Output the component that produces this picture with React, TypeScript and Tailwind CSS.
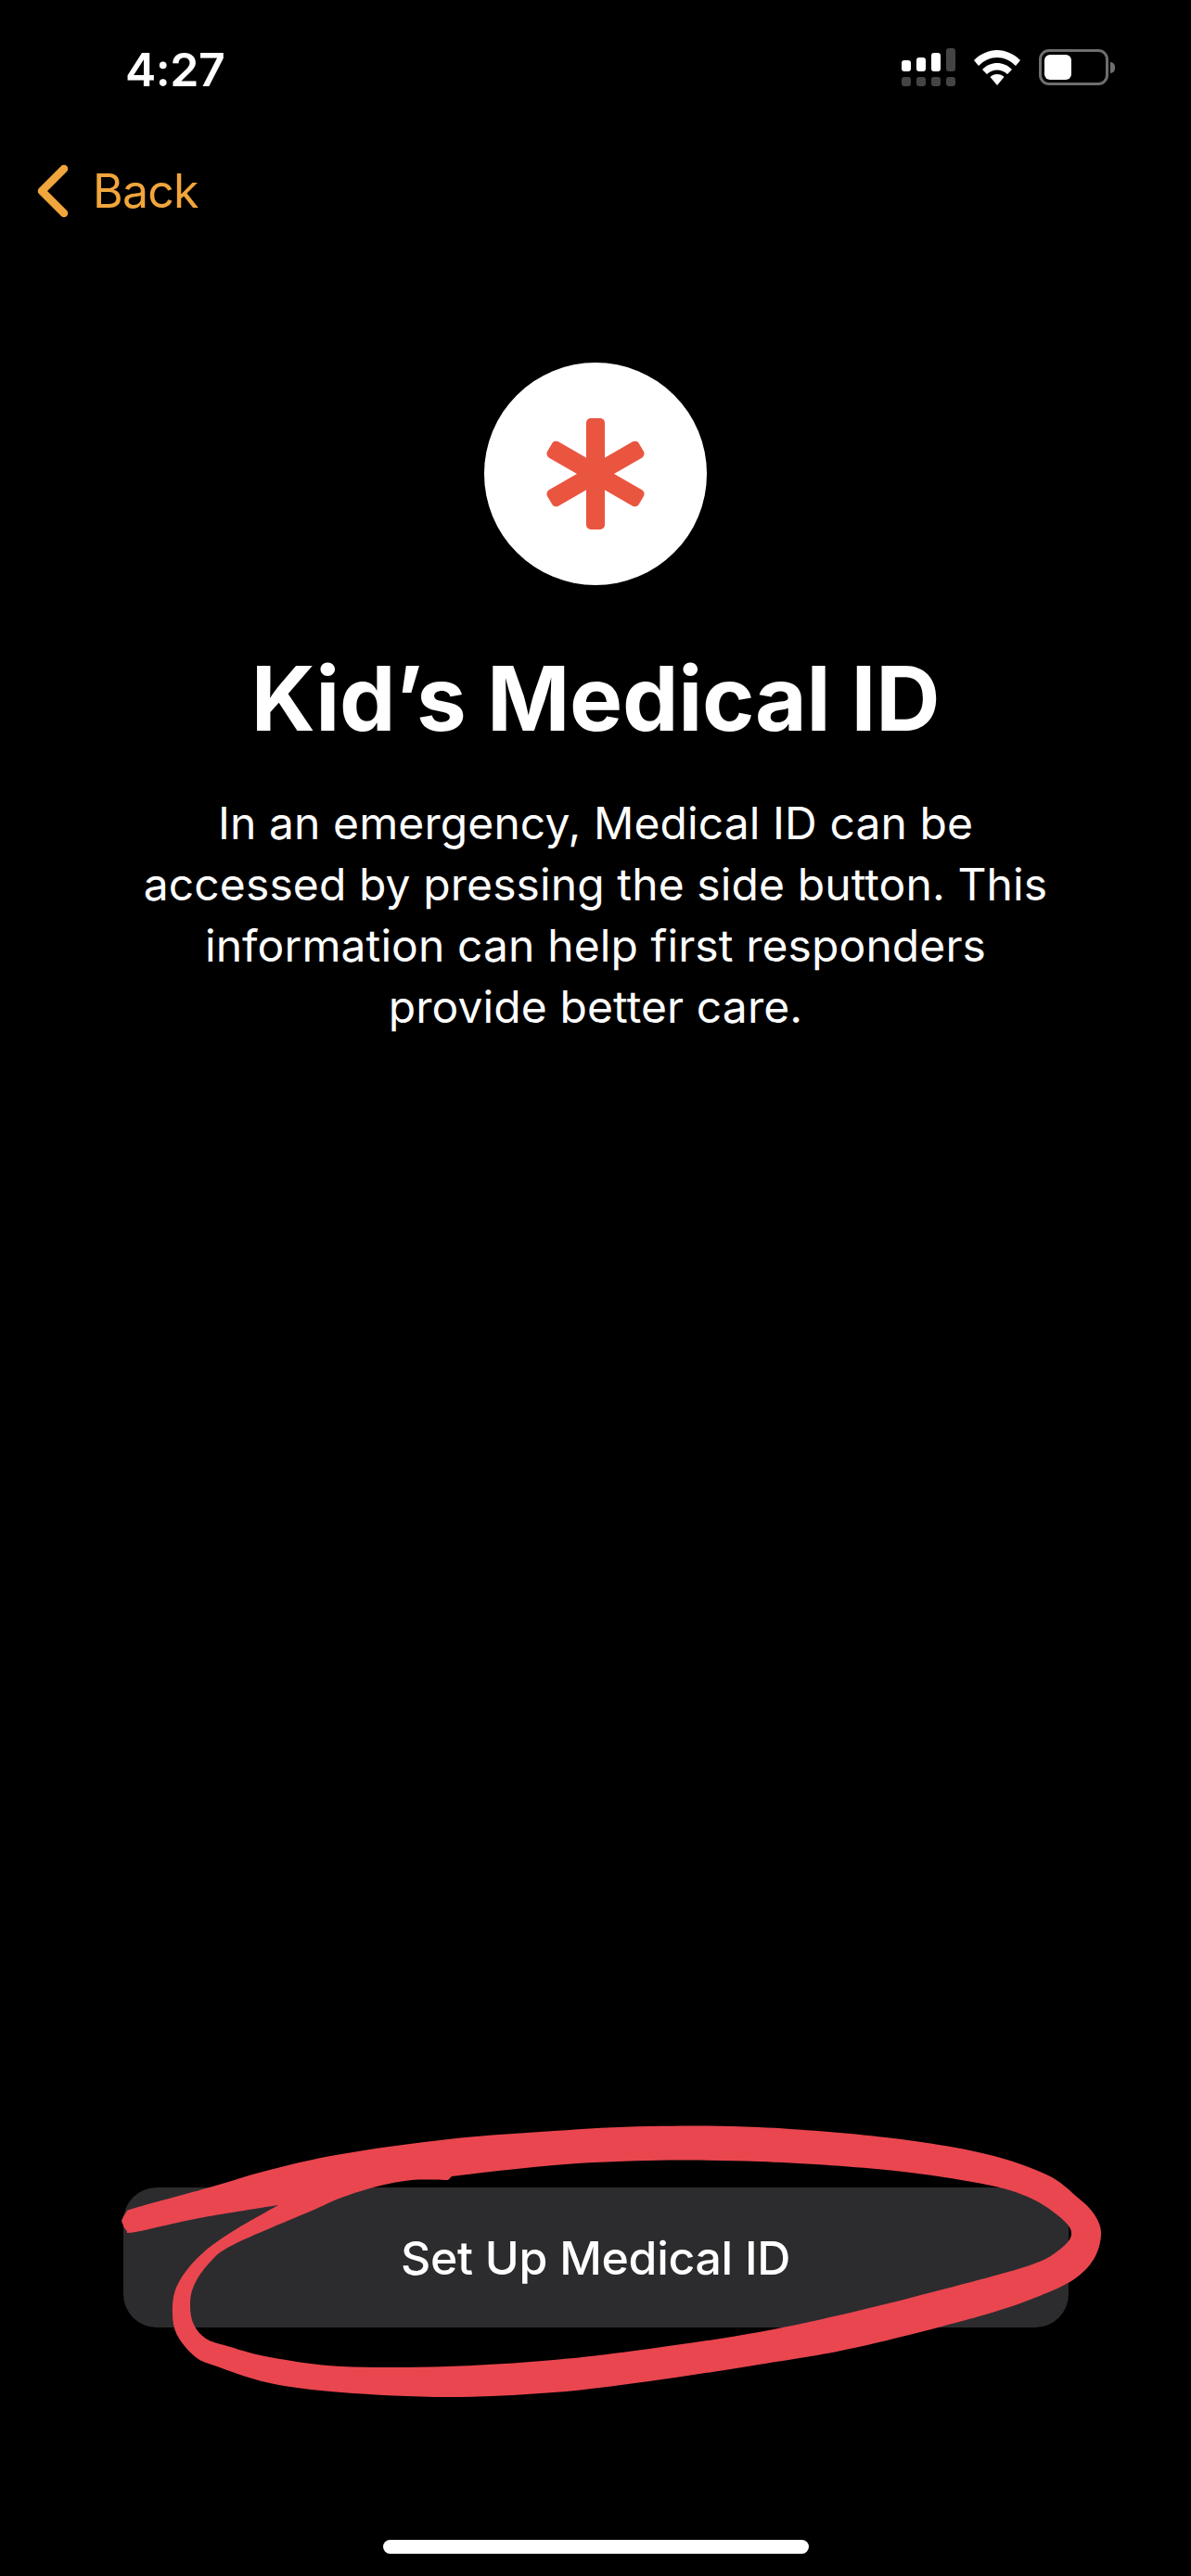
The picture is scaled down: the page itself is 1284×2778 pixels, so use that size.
import React from 'react';

type Pt = [number, number];

// turns a list of points into a smooth curve (catmull-rom), keeps the hand drawn look
const smooth = (pts: Pt[]) => {
  let d = '';
  for (let i = 0; i < pts.length - 1; i++) {
    const p0 = pts[i - 1] || pts[i];
    const p1 = pts[i];
    const p2 = pts[i + 1];
    const p3 = pts[i + 2] || p2;
    const c1x = p1[0] + (p2[0] - p0[0]) / 6;
    const c1y = p1[1] + (p2[1] - p0[1]) / 6;
    const c2x = p2[0] - (p3[0] - p1[0]) / 6;
    const c2y = p2[1] - (p3[1] - p1[1]) / 6;
    d += ` C${c1x} ${c1y} ${c2x} ${c2y} ${p2[0]} ${p2[1]}`;
  }
  return d;
};

const outer: Pt[] = [
  [131, 2395], [136, 2386], [146, 2381], [222, 2360], [291, 2340], [368, 2323], [483, 2307], [597, 2298], [700, 2293],
  [818, 2294], [955, 2305], [1059, 2322], [1128, 2345], [1162, 2370], [1179, 2387], [1187, 2407], [1181, 2433], [1162, 2455],
  [1128, 2473], [1059, 2497], [921, 2532], [818, 2550], [700, 2568], [597, 2580], [483, 2585], [368, 2580],
  [291, 2570], [234, 2552], [211, 2542], [192, 2520], [186, 2497], [190, 2467], [211, 2437], [245, 2410], [300, 2378],
];
const tail: Pt[] = [[300, 2378], [215, 2392], [146, 2407], [136, 2405], [131, 2395]];
const hole: Pt[] = [
  [341, 2382], [253, 2420], [226, 2440], [209, 2465], [205, 2487], [209, 2507], [222, 2522], [245, 2530], [291, 2542],
  [368, 2552], [483, 2552], [597, 2545], [700, 2533], [818, 2515], [921, 2493], [1024, 2467], [1110, 2443],
  [1141, 2427], [1155, 2410], [1145, 2393], [1110, 2370], [1059, 2355], [955, 2340], [818, 2331], [700, 2330],
  [597, 2335], [487, 2347],
];
const holeEnd: Pt[] = [[483, 2351], [444, 2351], [406, 2358], [368, 2370], [341, 2382]];

const scribble =
  `M${outer[0][0]} ${outer[0][1]}` + smooth(outer) + smooth(tail) + ' Z ' +
  `M${hole[0][0]} ${hole[0][1]}` + smooth(hole) + ` L${holeEnd[0][0]} ${holeEnd[0][1]}` + smooth(holeEnd) + ' Z';

const App = () => {
  return (
    <div className="relative flex h-[2778px] flex-col overflow-hidden bg-black font-['Inter',sans-serif] text-white">
      {/* Status bar */}
      <div className="flex h-[156px] items-start justify-between pl-[135px] pr-[82px] pt-[43px]">
        <span className="mt-[2px] text-[50px] font-semibold leading-[60px] tracking-[-0.5px]">4:27</span>
        <div className="mt-[9px] flex items-start">
          <svg width="60" height="42" viewBox="0 0 60 42" fill="#fff">
            <rect x="0" y="13" width="10" height="12" rx="3" />
            <rect x="16" y="10" width="10" height="15" rx="3" />
            <rect x="32" y="5" width="10" height="20" rx="3" />
            <rect x="48" y="0" width="10" height="25" rx="3" fill="#444" />
            <rect x="0" y="31" width="10" height="10" rx="3" fill="#444" />
            <rect x="16" y="31" width="10" height="10" rx="3" fill="#444" />
            <rect x="32" y="31" width="10" height="10" rx="3" fill="#444" />
            <rect x="48" y="31" width="10" height="10" rx="3" fill="#444" />
          </svg>
          <svg className="ml-[18px] mt-[2px]" width="50" height="38" viewBox="0 0 50 38" fill="#fff">
            <path d="M25 0C34 0 43 4 50 11L45 17C39 11 32 8 25 8S11 11 5 17L0 11C7 4 16 0 25 0Z" />
            <path d="M25 14C31 14 36 16 41 21L36 26C33 23 29 21.500 25 21.500S17 23 14 26L9 21C14 16 19 14 25 14Z" />
            <path d="M25 26C28 26 30.500 27 32.500 29L25 38L17.500 29C19.500 27 22 26 25 26Z" />
          </svg>
          <div className="ml-[20px] mt-[1px] flex items-center">
            <div className="h-[39px] w-[75px] rounded-[11px] border-[3px] border-[#6e6e6e] p-[3px]">
              <div className="h-full w-[29px] rounded-[6px] bg-white" />
            </div>
            <div className="ml-[2px] h-[12px] w-[5px] rounded-r-full bg-[#6e6e6e]" />
          </div>
        </div>
      </div>

      {/* Back */}
      <div className="flex h-[100px] items-center pl-[39px]">
        <svg width="36" height="60" viewBox="0 0 36 60" fill="none" stroke="#f0a63c" strokeWidth="8.5" strokeLinecap="round" strokeLinejoin="round">
          <path d="M30 6L6 30L30 54" />
        </svg>
        <span className="ml-[25px] text-[50px] leading-[60px] tracking-[-0.8px] text-[#f0a63c]">Back</span>
      </div>

      {/* Medical ID intro */}
      <div className="mt-[135px] flex flex-col items-center">
        <div className="flex h-[240px] w-[240px] items-center justify-center rounded-full bg-white">
          <svg width="120" height="120" viewBox="0 0 120 120" fill="#ea5540">
            <rect x="50" y="0" width="20" height="120" rx="5" />
            <rect x="50" y="3" width="20" height="114" rx="5" transform="rotate(60 60 60)" />
            <rect x="50" y="3" width="20" height="114" rx="5" transform="rotate(-60 60 60)" />
          </svg>
        </div>
        <h1 className="mt-[72px] text-[96px] font-bold leading-[100px] tracking-[-0.3px]">Kid’s Medical ID</h1>
        <p className="mt-[52px] w-[1020px] text-center text-[48px] leading-[66px] tracking-[0.1px]">
          In an emergency, Medical ID can be
          <br />
          accessed by pressing the side button. This
          <br />
          information can help first responders
          <br />
          provide better care.
        </p>
      </div>

      {/* Button + home indicator */}
      <div className="mt-auto flex flex-col items-center">
        <button className="flex h-[151px] w-[1019px] items-center justify-center rounded-[36px] bg-[#2c2c2e] pt-[2px] text-[50px] font-medium tracking-[-0.3px] text-white">
          Set Up Medical ID
        </button>
        <div className="mb-[24px] mt-[229px] h-[15px] w-[459px] rounded-full bg-white" />
      </div>

      {/* red marker annotation over the button */}
      <svg className="absolute left-0 top-0" width="1284" height="2778" viewBox="0 0 1284 2778">
        <path d={scribble} fill="#e9464f" fillRule="evenodd" />
      </svg>
    </div>
  );
};

export default App;
